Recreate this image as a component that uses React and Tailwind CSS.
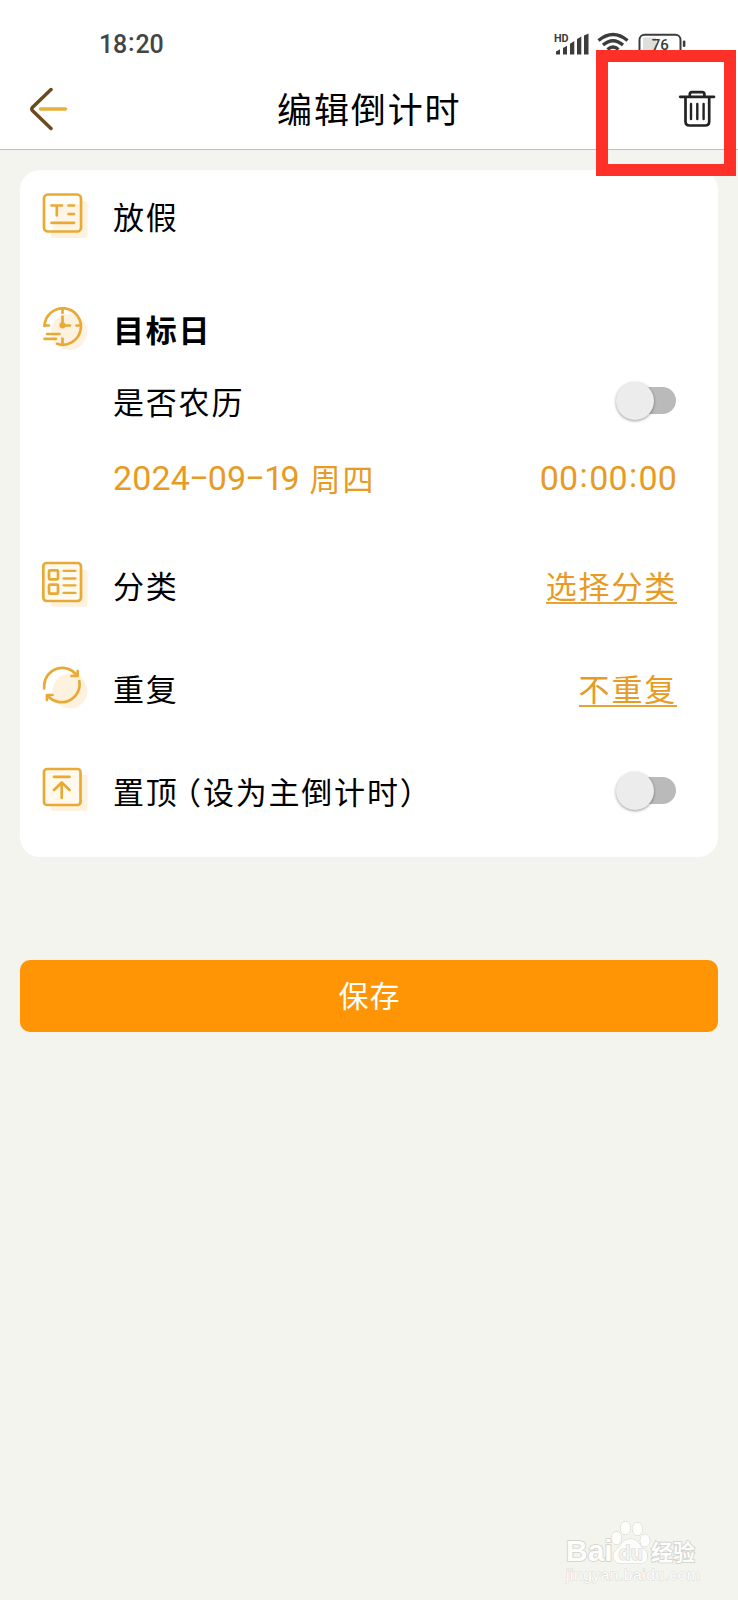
import React, { useState } from 'react';

const ORANGE = '#e9aa35';

function StatusIcons() {
  return (
    <svg className="tracking-normal" width="136" height="24" viewBox="0 0 136 24" fill="none">
      <text x="0" y="9.5" fontSize="10.8" fontWeight="700" fontFamily="Roboto, sans-serif" fill="#3c3c3c">
        HD
      </text>
      <g fill="#3c3c3c">
        <path d="M2 19.5L6 17.2V22.5H2Z" />
        <path d="M9 16L13 13.7V22.5H9Z" />
        <path d="M16 11.7L20.3 9V22.5H16Z" />
        <path d="M23 7L27.3 4.5V22.5H23Z" />
        <path d="M30 3.5L34.5 1.5V22.5H30Z" />
      </g>
      <g stroke="#3c3c3c" strokeWidth="3.4">
        <path d="M44.5 8.5Q59 -3.5 73.5 8.5" />
        <path d="M49 13Q59 4.5 69 13" />
        <path d="M53.5 17.5Q59 12.5 64.5 17.5" />
      </g>
      <rect x="89" y="5.5" width="13" height="16" fill="#dedede" />
      <rect x="85.5" y="2.8" width="41" height="22" rx="5" stroke="#3c3c3c" strokeWidth="2" />
      <rect x="128.8" y="8.5" width="2.6" height="6.5" rx="1.2" fill="#3c3c3c" />
      <text x="97.7" y="17.5" fontSize="15" fontWeight="500" fontFamily="Roboto, sans-serif" fill="#3c3c3c">
        76
      </text>
    </svg>
  );
}

function BackIcon() {
  return (
    <svg width="40" height="44" viewBox="0 0 40 44" fill="none" strokeWidth="3.5" strokeLinecap="round" strokeLinejoin="round">
      <path d="M22 2.5L3.6 20.3Q2 22 3.6 23.7L22 41.5" stroke="#6b4a1e" />
      <path d="M11.5 22H36.5" stroke="#e6b03c" />
    </svg>
  );
}

function TrashIcon() {
  return (
    <svg width="38" height="38" viewBox="0 0 38 38" fill="none" stroke="#232323" strokeWidth="2.7" strokeLinecap="round" strokeLinejoin="round">
      <path d="M2.2 6.8H36" />
      <path d="M11.8 6.5V4.3Q11.8 2.1 13.8 2.1H24.4Q26.4 2.1 26.4 4.3V6.5" />
      <path d="M7.5 7.5V31.5Q7.5 35.5 11.5 35.5H27.2Q31.2 35.5 31.2 31.5V7.5" />
      <path d="M13 14V29M19.3 14V29M25.6 14V29" strokeWidth="2.4" />
    </svg>
  );
}

function IconBox({ children }) {
  return (
    <svg
      className="shrink-0"
      width="48"
      height="48"
      viewBox="0 0 48 48"
      fill="none"
      stroke={ORANGE}
      strokeWidth="2.7"
      strokeLinecap="round"
      strokeLinejoin="round"
    >
      {children}
    </svg>
  );
}

const icons = {
  title: (
    <IconBox>
      <rect x="11" y="9" width="36.5" height="37" rx="3" fill="#fdf2df" stroke="none" />
      <rect x="4" y="2.5" width="37" height="37" rx="4" fill="#fffdf8" />
      <path d="M20 12H39V38H12Z" fill="#fef5e6" stroke="none" />
      <path d="M11.5 13.5H22M16.8 13.5V23.3M28.5 13.5H34M28.5 22H34M11.5 30.8H34" />
    </IconBox>
  ),
  clock: (
    <IconBox>
      <circle cx="29" cy="28" r="18" fill="#fdf2df" stroke="none" />
      <path d="M4.5 22A18.2 18.2 0 1 1 17 39.8" />
      <path d="M22.5 4V9M4.5 21.5H9M36.5 21.5H40.5M22.5 34.5V40" />
      <path d="M22.5 12.5V21.5H30" />
      <circle cx="22.5" cy="21.3" r="1.8" fill={ORANGE} />
      <path d="M7 30H19.5M4.5 34.8H16" />
    </IconBox>
  ),
  category: (
    <IconBox>
      <rect x="11" y="9" width="36.5" height="37" rx="3" fill="#fdf2df" stroke="none" />
      <rect x="3.3" y="2" width="37.7" height="38" rx="3.5" fill="#fffaf0" />
      <rect x="9" y="9.3" width="9" height="9" rx="1" />
      <rect x="9" y="23.7" width="9" height="9" rx="1" />
      <path d="M23.5 9.8H35.5M23.5 17.5H35.5M23.5 24.3H35.5M23.5 31.8H35.5" strokeWidth="2.3" />
    </IconBox>
  ),
  repeat: (
    <IconBox>
      <circle cx="30" cy="27" r="17.5" fill="#fdf2df" stroke="none" />
      <path d="M4.2 24.5V21A18 18 0 0 1 36.5 11" />
      <path d="M37.7 7V12H31.5" />
      <path d="M39.3 17A18 18 0 0 1 8 32" />
      <path d="M7 36V31H12.5" />
    </IconBox>
  ),
  pin: (
    <IconBox>
      <rect x="11" y="9" width="36.5" height="36" rx="2" fill="#fdf2df" stroke="none" />
      <rect x="4" y="3" width="36.5" height="36" rx="3" fill="#fff9ee" />
      <path d="M14 10.8H29.5M21.7 17V32M14 24L21.7 16.5L29.5 24" />
    </IconBox>
  )
};

function Toggle({ checked, onChange }) {
  return (
    <button
      type="button"
      role="switch"
      aria-checked={checked}
      onClick={() => onChange(!checked)}
      className="relative mr-[1px] h-[27px] w-[55px] rounded-full bg-[#bababa]"
    >
      <span
        className={`absolute -top-[5px] h-[38px] w-[38px] rounded-full bg-[#ececec] shadow-[0_1px_3px_rgba(0,0,0,0.4)] ${
          checked ? 'right-[-5px]' : 'left-[-5px]'
        }`}
      />
    </button>
  );
}

function Row({ icon, label, children, className = '' }) {
  return (
    <div className={`flex h-12 items-center ${className}`}>
      <div className="w-[73px] shrink-0">{icon}</div>
      <div className="flex h-full flex-1 items-center justify-between whitespace-nowrap">
        {label}
        {children}
      </div>
    </div>
  );
}

const Colon = () => <span className="relative -top-[3px] mx-[1.3px]">:</span>;
const Dash = () => (
  <span className="inline-block w-[18px] -translate-y-[2px] scale-x-[1.75] text-center tracking-normal">-</span>
);

function App() {
  const [lunar, setLunar] = useState(false);
  const [pinned, setPinned] = useState(false);

  return (
    <div className="relative flex h-[1600px] w-[738px] flex-col overflow-hidden bg-[#f3f4ee] font-['Noto_Sans_CJK_SC',sans-serif] text-[31px] leading-[48px] tracking-[1.8px] text-black">
      <header className="h-[150px] shrink-0 border-b border-[#bdbdbd] bg-white">
        <div className="flex h-[66px] items-start justify-between pl-[99px] pr-[48px] pt-8">
          <span className="pt-[1px] font-[Roboto,sans-serif] text-[25px] font-medium leading-6 tracking-[-0.2px] text-[#444]">
            18<span className="relative -top-[2px] mx-[1px]">:</span>20
          </span>
          <StatusIcons />
        </div>
        <div className="flex h-[82px] items-start pl-[29px] pr-[22px]">
          <div className="pt-[21px]">
            <BackIcon />
          </div>
          <h1 className="ml-[208px] pt-[18px] text-[35px] leading-[48px] tracking-[1.9px]">编辑倒计时</h1>
          <div className="ml-auto pt-6">
            <TrashIcon />
          </div>
        </div>
      </header>

      <main className="flex flex-col px-5 pt-5">
        <section className="h-[687px] rounded-[20px] bg-white pl-5 pr-[41px] pt-[22px]">
          <Row icon={icons.title} label={<span>放假</span>} />
          <Row icon={icons.clock} label={<span className="pt-[1px] font-bold">目标日</span>} className="mt-16" />
          <Row label={<span className="pt-[1px]">是否农历</span>} className="mt-6">
            <Toggle checked={lunar} onChange={setLunar} />
          </Row>
          <Row
            className="mt-[30px] text-[#e79b25]"
            label={
              <span className="flex items-center">
                <span className="font-[Roboto,sans-serif] text-[34px] tracking-[0.1px]">
                  2024
                  <Dash />
                  09
                  <Dash />
                  <span className="tracking-[-3px]">1</span>9
                </span>
                <span className="ml-[10px]">周四</span>
              </span>
            }
          >
            <span className="font-[Roboto,sans-serif] text-[34px] tracking-[0.1px]">
              00
              <Colon />
              00
              <Colon />
              00
            </span>
          </Row>
          <Row icon={icons.category} label={<span>分类</span>} className="mt-[59px]">
            <a className="h-[43px] self-start border-b-2 border-[#e5a33a] leading-[48px] text-[#e79b25]">选择分类</a>
          </Row>
          <Row icon={icons.repeat} label={<span>重复</span>} className="mt-[55px]">
            <a className="h-[43px] self-start border-b-2 border-[#e5a33a] leading-[48px] text-[#e79b25]">不重复</a>
          </Row>
          <Row
            icon={icons.pin}
            label={
              <span className="pt-[1px]">
                置顶<span className="ml-[7px] [font-feature-settings:'halt']">（</span>设为主倒计时）
              </span>
            }
            className="mt-[54px]"
          >
            <Toggle checked={pinned} onChange={setPinned} />
          </Row>
        </section>

        <button
          type="button"
          className="mt-[103px] h-[72px] rounded-[10px] bg-[#ff9504] pb-[4px] pl-[1px] text-[30px] leading-[48px] tracking-[1px] text-white"
        >
          保存
        </button>
      </main>

      {/* highlight around the delete button */}
      <div className="absolute left-[596px] top-[50px] h-[126px] w-[140px] border-[12px] border-[#ff3028]" />

      {/* watermark */}
      <div className="absolute left-[566px] top-[1519px] w-[134px] whitespace-nowrap text-[#fdfdfb]">
        <div className="flex h-[46px] items-end tracking-normal [-webkit-text-stroke:1.6px_#d0d1cb] [paint-order:stroke_fill]">
          <span className="w-[45px] font-['Liberation_Sans',sans-serif] text-[30px] font-bold leading-[28px]">Bai</span>
          <svg width="40" height="46" viewBox="0 0 40 46" fill="#fdfdfb" stroke="#d0d1cb" strokeWidth="1">
            <ellipse cx="5.5" cy="19" rx="5" ry="6.3" />
            <ellipse cx="14.5" cy="9" rx="5" ry="6.5" />
            <ellipse cx="26.5" cy="10" rx="5" ry="6.5" />
            <ellipse cx="34" cy="21.5" rx="4.8" ry="6.2" />
            <path d="M19.5 20C12 20 11 26 6 30C-1 36 3 44.5 10 44.5H28C37 44.5 39 36 33 30C28 26 27 20 19.5 20Z" />
            <text x="7.5" y="41" fontSize="20" fontWeight="700" fontFamily="Liberation Sans, sans-serif" fill="#f3f4ee">
              du
            </text>
          </svg>
          <span className="text-[22px] font-bold leading-[29px]">经验</span>
        </div>
        <div className="font-['Liberation_Sans',sans-serif] text-[15.5px] leading-5 tracking-[0.55px] [-webkit-text-stroke:1px_#dadbd5] [paint-order:stroke_fill]">
          jingyan.baidu.com
        </div>
      </div>
    </div>
  );
}

export default App;
